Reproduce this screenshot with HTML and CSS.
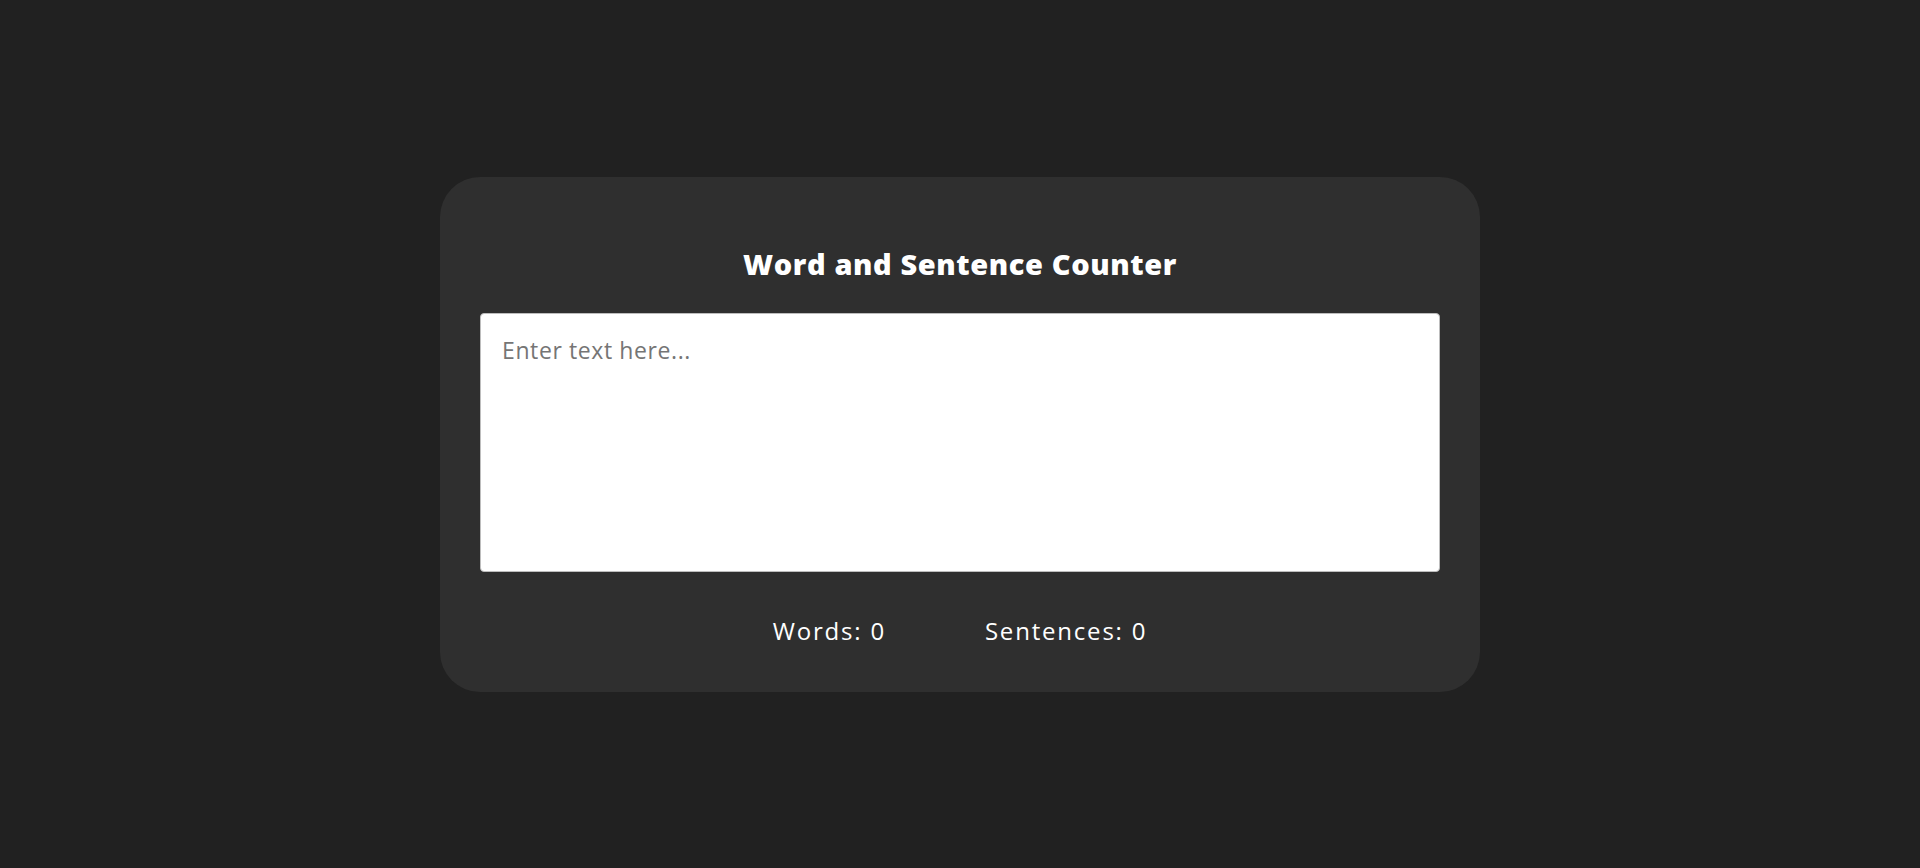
FILE: index.html
```html
<!DOCTYPE html>
<html lang="en">
<head>
<meta charset="utf-8">
<title>Word and Sentence Counter</title>
<link rel="stylesheet" href="styles.css">
</head>
<body>
<main class="card">
  <h1 class="title">Word and Sentence Counter</h1>
  <textarea class="input" placeholder="Enter text here..."></textarea>
  <div class="stats">
    <span class="stat">Words: <span>0</span></span>
    <span class="stat">Sentences: <span>0</span></span>
  </div>
</main>
</body>
</html>
```
FILE: styles.css
```css
* { box-sizing: border-box; }
html, body { margin: 0; padding: 0; }
body {
  background: #212121;
  min-height: 100vh;
  display: flex;
  align-items: center;
  justify-content: center;
  font-family: "Open Sans", "Noto Sans", sans-serif;
  color: #fff;
}
.card {
  width: 1040px;
  background: #2f2f2f;
  border-radius: 40px;
  padding: 40px;
  display: flex;
  flex-direction: column;
}
.title {
  margin: 26px 0 28px;
  font-size: 29px;
  line-height: 42px;
  font-weight: 800;
  letter-spacing: 0.6px;
  text-align: center;
  color: #fff;
}
.input {
  width: 960px;
  height: 259px;
  border: 1px solid #bdbdbd;
  border-radius: 4px;
  padding: 20px 21px;
  font-family: inherit;
  font-size: 23px;
  line-height: 32px;
  letter-spacing: 0.6px;
  resize: none;
  background: #fff;
  color: #222;
  outline: none;
}
.input::placeholder { color: #757575; }
.stats {
  margin: 41px 0 3px;
  display: flex;
  justify-content: center;
  gap: 99px;
  font-size: 24px;
  line-height: 36px;
  font-weight: 500;
  letter-spacing: 1.8px;
}
```
